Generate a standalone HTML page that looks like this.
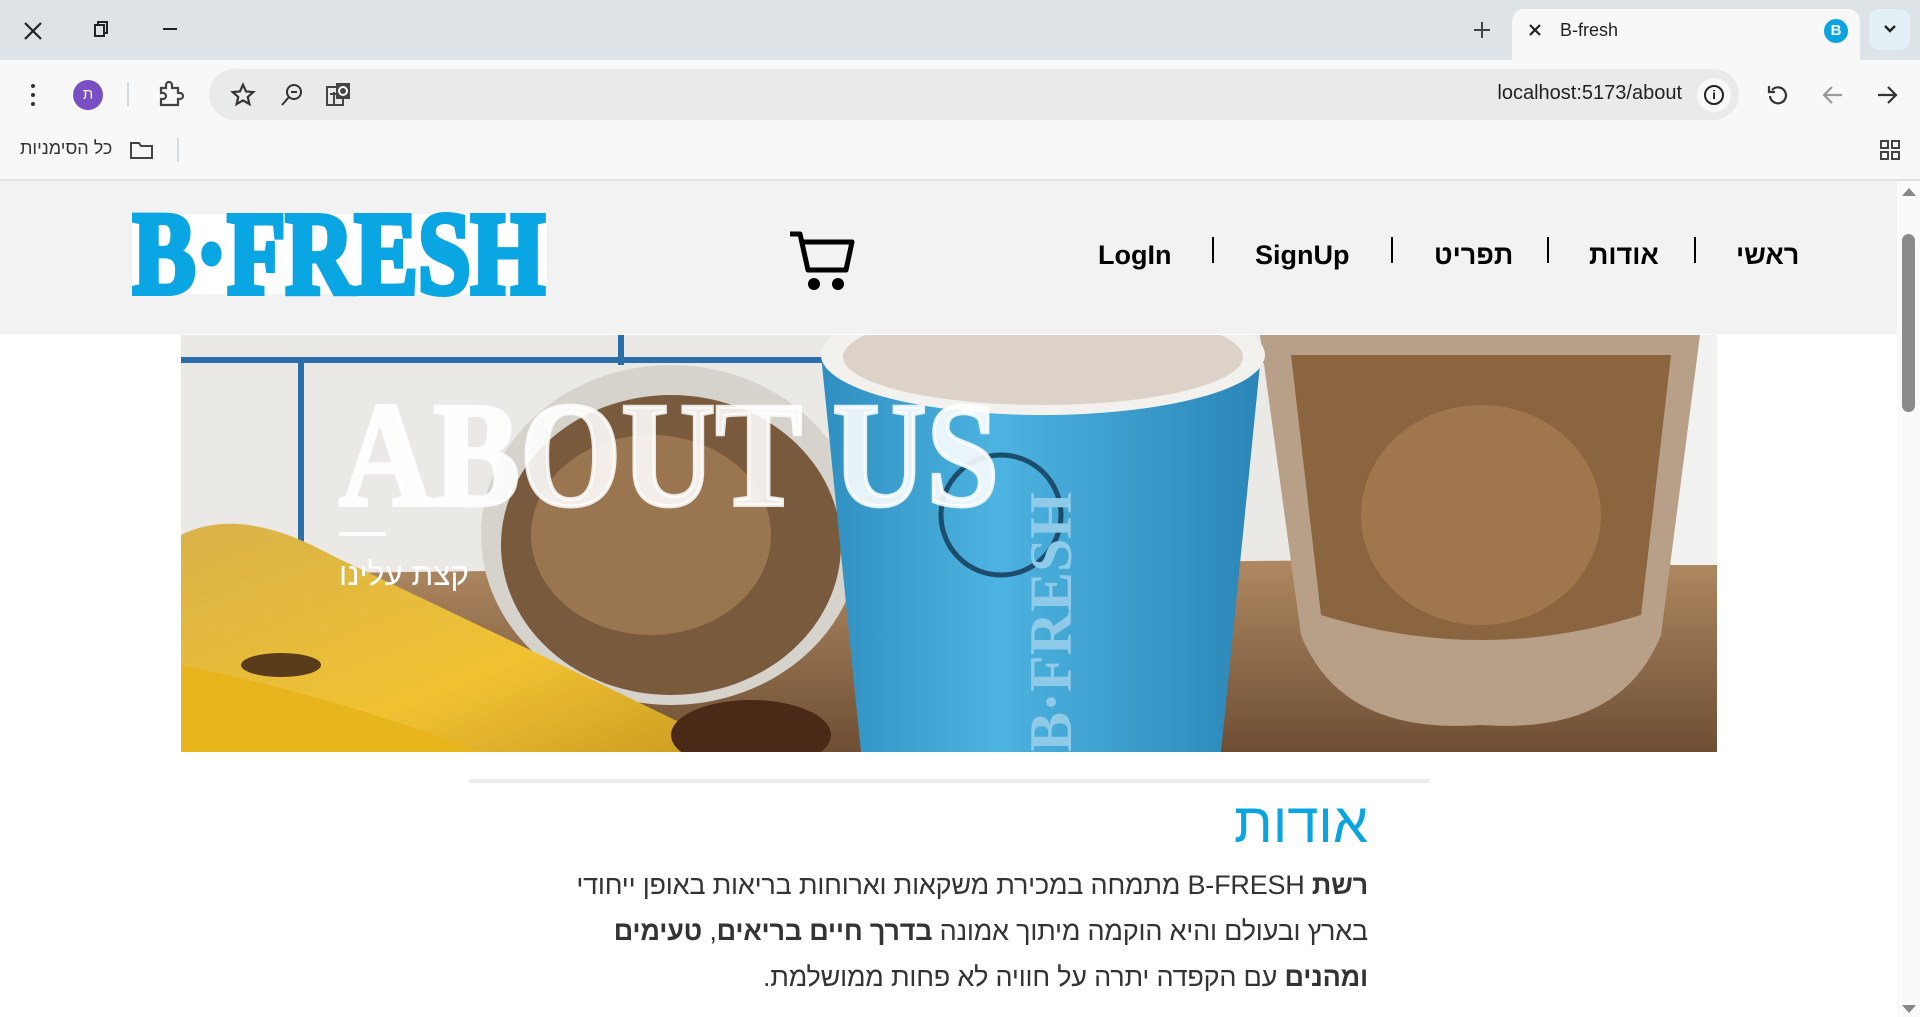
<!DOCTYPE html>
<html><head><meta charset="utf-8"><style>
*{margin:0;padding:0;box-sizing:border-box}
body{width:1920px;height:1017px;overflow:hidden;background:#fff;font-family:"Liberation Sans","Noto Sans CJK SC",sans-serif;position:relative}
.abs{position:absolute}
</style></head><body>
<!-- tab strip -->
<div class="abs" style="left:0;top:0;width:1920px;height:60px;background:#dde3e6"></div>
<svg class="abs" style="left:22px;top:20px" width="22" height="22" viewBox="0 0 22 22"><path d="M3 3L19 19M19 3L3 19" stroke="#222" stroke-width="2.2"/></svg>
<svg class="abs" style="left:92px;top:20px" width="18" height="18" viewBox="0 0 18 18"><rect x="3" y="5" width="9" height="11" fill="none" stroke="#222" stroke-width="2"/><path d="M6 5V2H15V13H12" fill="none" stroke="#222" stroke-width="2"/></svg>
<div class="abs" style="left:163px;top:28px;width:14px;height:2px;background:#222"></div>
<svg class="abs" style="left:1472px;top:20px" width="20" height="20" viewBox="0 0 20 20"><path d="M10 2V18M2 10H18" stroke="#444" stroke-width="2"/></svg>
<div class="abs" style="left:1512px;top:9px;width:348px;height:52px;background:#f8f8f8;border-radius:12px 12px 0 0"></div>
<svg class="abs" style="left:1528px;top:23px" width="14" height="14" viewBox="0 0 14 14"><path d="M2 2L12 12M12 2L2 12" stroke="#222" stroke-width="2.2"/></svg>
<div class="abs" style="left:1560px;top:20px;font-size:18px;color:#222">B-fresh</div>
<div class="abs" style="left:1824px;top:19px;width:24px;height:24px;border-radius:50%;background:#0aa5e0;color:#fff;font-weight:bold;font-size:15px;text-align:center;line-height:24px">B</div>
<div class="abs" style="left:1869px;top:9px;width:41px;height:41px;border-radius:10px;background:#e3f1f6"></div>
<svg class="abs" style="left:1883px;top:24px" width="14" height="10" viewBox="0 0 14 10"><path d="M2 2L7 7L12 2" fill="none" stroke="#222" stroke-width="2.4"/></svg>
<!-- toolbar -->
<div class="abs" style="left:0;top:60px;width:1920px;height:121px;background:#f8f8f8;border-bottom:2px solid #e2e2e2"></div>
<div class="abs" style="left:31px;top:84px;width:4px;height:4px;border-radius:2px;background:#333;box-shadow:0 9px 0 #333,0 18px 0 #333"></div>
<div class="abs" style="left:73px;top:80px;width:30px;height:30px;border-radius:50%;background:#7b4fc4;color:#fff;font-size:15px;text-align:center;line-height:30px">ת</div>
<div class="abs" style="left:127px;top:82px;width:2px;height:24px;background:#d6dde0"></div>
<svg class="abs" style="left:155px;top:80px" width="30" height="30" viewBox="0 0 30 30"><path d="M6 8H11V5a3 3 0 0 1 6 0V8H23V13h2a3 3 0 0 1 0 6h-2V25H6V19h2a3 3 0 0 0 0-6H6Z" fill="none" stroke="#444" stroke-width="2.2"/></svg>
<div class="abs" style="left:209px;top:69px;width:1530px;height:51px;border-radius:26px;background:#e9eaea"></div>
<svg class="abs" style="left:230px;top:82px" width="26" height="26" viewBox="0 0 24 24"><path d="M12 2.5l2.8 6.2 6.7.6-5.1 4.5 1.5 6.6L12 17l-5.9 3.4 1.5-6.6-5.1-4.5 6.7-.6z" fill="none" stroke="#333" stroke-width="2"/></svg>
<svg class="abs" style="left:279px;top:82px" width="26" height="26" viewBox="0 0 26 26"><circle cx="15" cy="10" r="7" fill="none" stroke="#333" stroke-width="2"/><path d="M10 15L3 23M12 10H18" stroke="#333" stroke-width="2"/></svg>
<svg class="abs" style="left:325px;top:80px" width="28" height="28" viewBox="0 0 28 28"><rect x="2" y="7" width="16" height="18" fill="none" stroke="#444" stroke-width="2"/><rect x="11" y="3" width="14" height="16" fill="#444"/><circle cx="18" cy="11" r="4" fill="none" stroke="#fff" stroke-width="2"/><path d="M5 14H14M9 12V24" stroke="#444" stroke-width="2"/></svg>
<div class="abs" style="left:1480px;top:82px;width:202px;font-size:20px;color:#222;text-align:right">localhost:5173/about</div>
<div class="abs" style="left:1697px;top:78px;width:34px;height:34px;border-radius:50%;background:#f8f8f8"></div>
<div class="abs" style="left:1704px;top:85px;width:20px;height:20px;border:2px solid #222;border-radius:50%;font-size:12px;text-align:center;line-height:16px;font-weight:bold">i</div>
<svg class="abs" style="left:1766px;top:83px" width="24" height="24" viewBox="0 0 24 24"><path d="M6 7A8 8 0 1 1 4 13" fill="none" stroke="#333" stroke-width="2.2"/><path d="M3 3V9H9" fill="none" stroke="#333" stroke-width="2.2"/></svg>
<svg class="abs" style="left:1821px;top:84px" width="24" height="22" viewBox="0 0 24 22"><path d="M21 11H4M11 3L3 11L11 19" fill="none" stroke="#999" stroke-width="2.2"/></svg>
<svg class="abs" style="left:1875px;top:84px" width="24" height="22" viewBox="0 0 24 22"><path d="M3 11H20M13 3L21 11L13 19" fill="none" stroke="#333" stroke-width="2.2"/></svg>
<div class="abs" style="left:20px;top:138px;font-size:18px;color:#333">כל הסימניות</div>
<svg class="abs" style="left:129px;top:139px" width="26" height="22" viewBox="0 0 26 22"><path d="M2 4H10L12 7H23V19H2Z" fill="none" stroke="#444" stroke-width="2"/></svg>
<div class="abs" style="left:177px;top:138px;width:2px;height:24px;background:#d6dde0"></div>
<svg class="abs" style="left:1879px;top:139px" width="22" height="22" viewBox="0 0 22 22"><g fill="none" stroke="#444" stroke-width="2"><rect x="2" y="2" width="7" height="7"/><rect x="13" y="2" width="7" height="7"/><rect x="2" y="13" width="7" height="7"/><rect x="13" y="13" width="7" height="7"/></g></svg>
<!-- header -->
<div class="abs" style="left:0;top:181px;width:1897px;height:153px;background:#f2f2f2"></div>
<svg class="abs" style="left:132px;top:210px" width="420" height="90" viewBox="0 0 420 90"><rect x="0" y="4" width="415" height="80" fill="#fff"/><text x="0" y="83" font-family="Liberation Serif" font-weight="bold" font-size="118" fill="#0aa5e3" stroke="#0aa5e3" stroke-width="6" textLength="413" lengthAdjust="spacingAndGlyphs">B·FRESH</text></svg>
<svg class="abs" style="left:786px;top:228px" width="70" height="64" viewBox="0 0 70 64"><path d="M4 6 H14 L22 42 H60 L66 14 H17" fill="none" stroke="#000" stroke-width="5" stroke-linejoin="round"/><circle cx="28" cy="56" r="6"/><circle cx="52" cy="56" r="6"/></svg>
<div class="abs" style="top:240px;left:1098px;font-size:27px;font-weight:bold;color:#000">LogIn</div>
<div class="abs" style="top:237px;left:1212px;width:2px;height:26px;background:#000"></div>
<div class="abs" style="top:240px;left:1255px;font-size:27px;font-weight:bold;color:#000">SignUp</div>
<div class="abs" style="top:237px;left:1391px;width:2px;height:26px;background:#000"></div>
<div class="abs" style="top:240px;left:1434px;font-size:27px;font-weight:bold;color:#000">תפריט</div>
<div class="abs" style="top:237px;left:1547px;width:2px;height:26px;background:#000"></div>
<div class="abs" style="top:240px;left:1589px;font-size:27px;font-weight:bold;color:#000">אודות</div>
<div class="abs" style="top:237px;left:1694px;width:2px;height:26px;background:#000"></div>
<div class="abs" style="top:240px;left:1736px;font-size:27px;font-weight:bold;color:#000">ראשי</div>
<!-- hero -->
<svg class="abs" style="left:181px;top:335px" width="1536" height="417" viewBox="0 0 1536 417">
<defs>
<linearGradient id="tbl" x1="0" y1="0" x2="0" y2="1"><stop offset="0" stop-color="#b08a62"/><stop offset="1" stop-color="#6e4e34"/></linearGradient>
<linearGradient id="cup" x1="0" y1="0" x2="1" y2="0"><stop offset="0" stop-color="#2f8fc0"/><stop offset=".4" stop-color="#4db3e0"/><stop offset="1" stop-color="#2a86b6"/></linearGradient>
<linearGradient id="ban" x1="0" y1="0" x2="1" y2="1"><stop offset="0" stop-color="#d9b24a"/><stop offset=".6" stop-color="#f0c232"/><stop offset="1" stop-color="#c99a20"/></linearGradient>
</defs>
<rect width="1536" height="417" fill="#ebe9e6"/>
<path d="M0 25 H1536 M120 25 V220 M440 0 V30" stroke="#2c6fa8" stroke-width="6" fill="none"/>
<path d="M0 240 L1536 220 V417 H0Z" fill="url(#tbl)"/>
<rect x="1380" y="0" width="156" height="230" fill="#f1f1f0"/>
<ellipse cx="490" cy="200" rx="190" ry="170" fill="#d6d2cc"/>
<ellipse cx="490" cy="210" rx="170" ry="150" fill="#7a5a3c"/>
<ellipse cx="470" cy="200" rx="120" ry="100" fill="#9a7650"/>
<path d="M1079 0 H1519 L1480 300 Q1440 400 1300 390 Q1160 400 1120 300Z" fill="#b8a088"/>
<path d="M1110 20 H1490 L1460 280 Q1300 330 1140 280Z" fill="#8b6540"/>
<ellipse cx="1300" cy="180" rx="120" ry="110" fill="#a0774c"/>
<path d="M0 200 Q60 170 150 220 Q340 310 560 417 H0Z" fill="url(#ban)"/>
<path d="M0 330 Q150 360 300 417 H0Z" fill="#e8b51c"/>
<ellipse cx="100" cy="330" rx="40" ry="12" fill="#5a3b1a"/>
<ellipse cx="570" cy="400" rx="80" ry="35" fill="#4a2a16"/>
<path d="M640 20 H1080 L1040 417 H680Z" fill="url(#cup)"/>
<ellipse cx="862" cy="20" rx="222" ry="60" fill="#f3f1ee"/>
<ellipse cx="862" cy="22" rx="200" ry="48" fill="#dcd2c8"/>
<circle cx="820" cy="180" r="60" fill="none" stroke="#1d4d6c" stroke-width="5"/>
<text x="0" y="0" transform="translate(890 417) rotate(-90)" font-family="Liberation Serif" font-weight="bold" font-size="60" fill="#8fcbe8">B·FRESH</text>
<text x="158" y="170" font-family="Liberation Serif" font-weight="bold" font-size="150" fill="#fff" fill-opacity=".88" textLength="660" lengthAdjust="spacingAndGlyphs" stroke="#fff" stroke-width="4" stroke-opacity=".85">ABOUT US</text>
<rect x="158" y="197" width="47" height="4" fill="#fff"/>
<text x="158" y="250" font-family="Liberation Sans, Noto Sans CJK SC, sans-serif" font-size="32" fill="#fff" textLength="130" lengthAdjust="spacingAndGlyphs">קצת עלינו</text>
</svg>
<!-- content -->
<div class="abs" style="left:469px;top:779px;width:960px;height:4px;background:#ececec"></div>
<div class="abs" style="left:900px;top:788px;width:468px;text-align:right;direction:rtl;font-size:56px;color:#0aa5e0;line-height:70px">אודות</div>
<div class="abs" style="left:468px;top:862px;width:900px;direction:rtl;text-align:right;font-size:27px;line-height:46px;color:#333;letter-spacing:-0.2px;white-space:nowrap">
<b>רשת</b> B-FRESH מתמחה במכירת משקאות וארוחות בריאות באופן ייחודי<br>בארץ ובעולם והיא הוקמה מיתוך אמונה <b>בדרך חיים בריאים</b>, <b>טעימים</b><br><b>ומהנים</b> עם הקפדה יתרה על חוויה לא פחות ממושלמת.</div>
<!-- scrollbar -->
<div class="abs" style="left:1897px;top:181px;width:23px;height:836px;background:#fafafa"></div>
<div class="abs" style="left:1902px;top:188px;width:0;height:0;border-left:7px solid transparent;border-right:7px solid transparent;border-bottom:8px solid #888"></div>
<div class="abs" style="left:1902px;top:234px;width:13px;height:178px;border-radius:7px;background:#8a8a8a"></div>
<div class="abs" style="left:1902px;top:1005px;width:0;height:0;border-left:7px solid transparent;border-right:7px solid transparent;border-top:8px solid #888"></div>
</body></html>
